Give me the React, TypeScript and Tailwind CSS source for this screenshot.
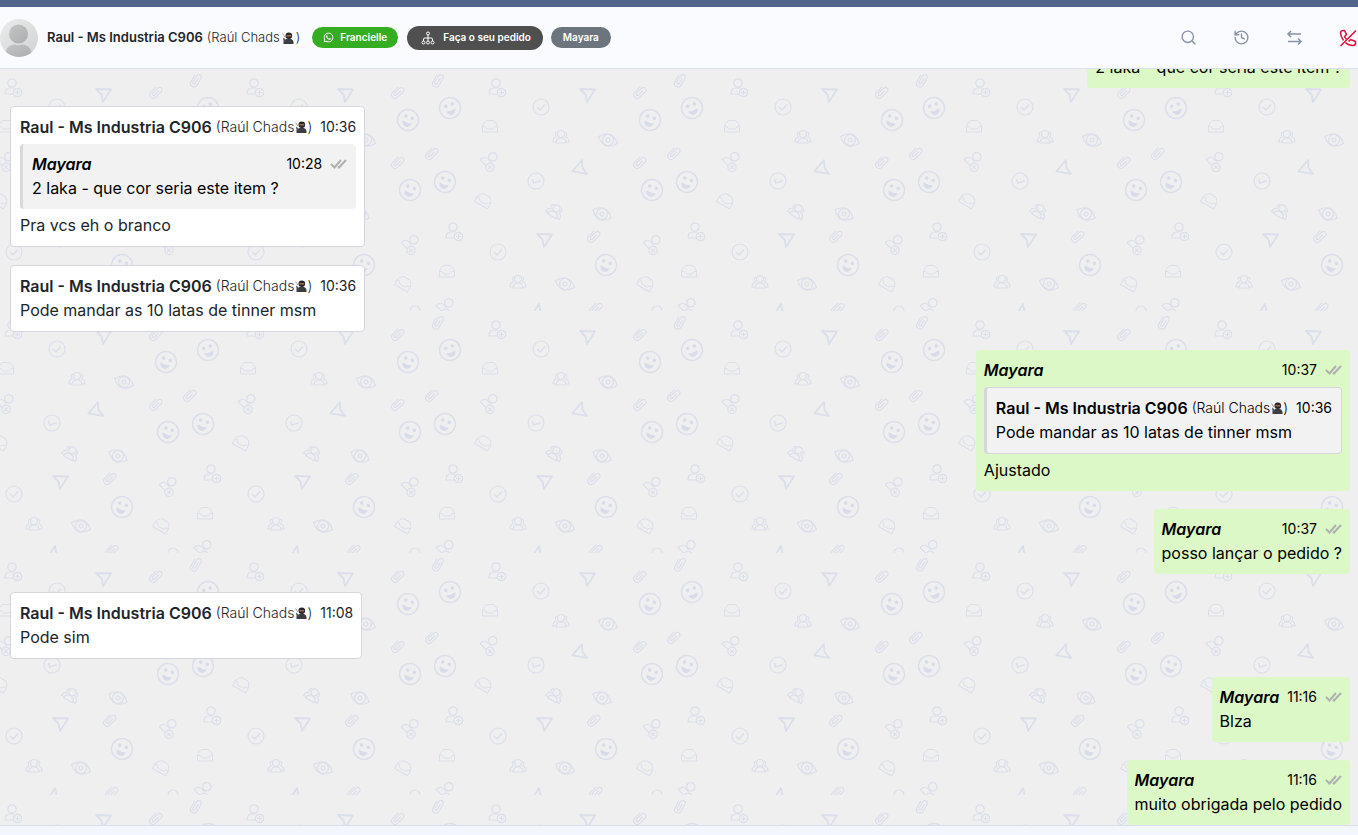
import { ReactNode } from "react"
import clsx from "clsx"
import { History, Search } from "lucide-react"
import { FaWhatsapp } from "react-icons/fa"

type Contact = "raul" | "mayara"

interface Message {
    id: number
    from: Contact
    time: string
    text: string
    quote?: Message
}

const messages: Message[] = [
    { id: 1, from: "mayara", time: "10:28", text: "2 laka - que cor seria este item ?" },
    {
        id: 2,
        from: "raul",
        time: "10:36",
        text: "Pra vcs eh o branco",
        quote: { id: 1, from: "mayara", time: "10:28", text: "2 laka - que cor seria este item ?" },
    },
    { id: 3, from: "raul", time: "10:36", text: "Pode mandar as 10 latas de tinner msm" },
    {
        id: 4,
        from: "mayara",
        time: "10:37",
        text: "Ajustado",
        quote: { id: 3, from: "raul", time: "10:36", text: "Pode mandar as 10 latas de tinner msm" },
    },
    { id: 5, from: "mayara", time: "10:37", text: "posso lançar o pedido ?" },
    { id: 6, from: "raul", time: "11:08", text: "Pode sim" },
    { id: 7, from: "mayara", time: "11:16", text: "Blza" },
    { id: 8, from: "mayara", time: "11:16", text: "muito obrigada pelo pedido" },
]

// doodle name, x, y, rotation inside the 242px tile
const doodles: [string, number, number, number][] = [
    ["clip", 156, 23, 0],
    ["clip", 196, 11, -15],
    ["smile", 166, 51, 20],
    ["smile", 208, 39, -20],
    ["add", 13, 19, 0],
    ["check", 57, 38, 0],
    ["cursor", 103, 26, 0],
    ["inbox", 6, 57, 0],
    ["users", 77, 68, 0],
    ["eye", 124, 71, 20],
    ["clip", 156, 93, 0],
    ["clip", 190, 84, 0],
    ["smile", 168, 121, 20],
    ["smile", 203, 113, 20],
    ["add", 6, 92, 45],
    ["check", 52, 112, 30],
    ["cursor", 97, 98, 188],
    ["inbox", 0, 131, 30],
    ["users", 71, 142, 30],
    ["eye", 118, 145, 25],
    ["add", 169, 175, 45],
    ["add", 212, 163, 0],
    ["check", 14, 183, 0],
    ["cursor", 60, 171, 0],
    ["clip", 110, 167, 0],
    ["smile", 122, 196, 20],
    ["inbox", 205, 202, 0],
    ["inbox", 162, 214, 30],
    ["users", 34, 213, 0],
    ["eye", 81, 215, 20],
    ["clip", 112, 239, 0],
    ["add", 204, 238, 45],
    ["cursor", 55, 242, 180],
    ["head", 173, 241, 0],
]

const shapes: Record<string, ReactNode> = {
    clip: (
        <g transform="rotate(-45)">
            <path d="M4-3.500H-4a3.500 3.500 0 0 0 0 7H4a2.500 2.500 0 0 0 0-5H-3.500a1.200 1.200 0 0 0 0 2.600H3" />
        </g>
    ),
    smile: (
        <g>
            <circle r="10.500" strokeWidth="1.500" />
            <circle cx="-3.500" cy="-3" r="1.800" fill="#d8dcea" stroke="none" />
            <circle cx="3.500" cy="-3" r="1.800" fill="#d8dcea" stroke="none" />
            <path d="M-5 2Q0 3.500 5 2Q4 7 0 7T-5 2Z" fill="#d8dcea" stroke="none" />
        </g>
    ),
    add: (
        <g>
            <circle cx="-1" cy="-5" r="4.200" />
            <path d="M1 6H-8Q-8 0-3 0H1" />
            <circle cx="4.500" cy="4.500" r="4.200" />
            <path d="M4.500 2v5M2 4.500h5" />
        </g>
    ),
    check: (
        <g>
            <circle r="8" />
            <path d="M-4 0l3 3 5-5.500" strokeWidth="1.500" />
        </g>
    ),
    cursor: <path d="M-7-6L8-5.500L0 7L-1.500-0.500Z" strokeWidth="1.800" strokeLinejoin="round" />,
    inbox: (
        <path d="M-7.500 6V0Q-6-4.500-3-5.500H3Q6-4.500 7.500 0V6ZM-7.500 0.500H-5Q-4 3-2 3H2Q4 3 5 0.500H7.500" strokeWidth="1" strokeLinejoin="round" />
    ),
    users: (
        <g>
            <circle cy="-3" r="3.500" />
            <path d="M-5 6Q-5 1 0 1T5 6ZM-5 5H-8Q-8 0-4 0M5 5H8Q8 0 4 0M-4-5Q-7-4-5-1M4-5Q7-4 5-1" />
        </g>
    ),
    eye: (
        <g>
            <path d="M-10 0Q0-12 10 0Q0 12-10 0Z" />
            <circle r="5.500" />
            <circle r="2" />
        </g>
    ),
    head: <circle cy="1" r="5" />,
}

const Doodle = ({ name, x, y, angle }: { name: string; x: number; y: number; angle: number }) => (
    <g transform={`translate(${x} ${y}) rotate(${angle})`}>{shapes[name]}</g>
)

const Wallpaper = () => (
    <svg className="absolute inset-0 h-full w-full" aria-hidden="true">
        <defs>
            <pattern id="doodles" width="242" height="242" patternUnits="userSpaceOnUse">
                <g fill="none" stroke="#dbdfeb" strokeWidth="1.200">
                    {doodles.map(([name, x, y, angle], i) => (
                        <g key={i}>
                            <Doodle name={name} x={x} y={y} angle={angle} />
                            {/* repeat the ones that cross the left edge */}
                            {x < 16 && <Doodle name={name} x={x + 242} y={y} angle={angle} />}
                        </g>
                    ))}
                </g>
            </pattern>
        </defs>
        <rect width="100%" height="100%" fill="url(#doodles)" />
    </svg>
)

const Ninja = ({ className }: { className?: string }) => (
    <svg viewBox="0 0 12 12" className={clsx("inline-block", className)} role="img" aria-label="ninja">
        <path d="M0.500 1.500L3 5" stroke="#85858a" strokeWidth="0.800" />
        <path d="M1.500 12V9.500Q2 7.500 4.500 7H9Q11 7.500 11.500 10V12Z" fill="#3c3c44" />
        <circle cx="6.800" cy="3.800" r="3.300" fill="#26262b" />
        <path d="M4.500 3h4.600v1.500H4.500z" fill="#a56b4c" />
        <path d="M1 5.500l2 1.500L3.500 10 1.500 9z" fill="#55555d" />
    </svg>
)

const DoubleCheck = () => (
    <svg viewBox="0 0 17 10" className="h-[10px] w-[17px]" fill="none" stroke="#b0b0b0" strokeWidth="2" aria-label="Lida">
        <path d="M1 5l3.500 3.500L11 1M8 7.500l1 1L16 1" />
    </svg>
)

const MessageHeader = ({ from, time }: { from: Contact; time: string }) => (
    <div className="flex h-6 items-center justify-between whitespace-nowrap">
        {from === "raul" ? (
            <div className="flex items-center">
                <span className="font-semibold">Raul - Ms Industria C906</span>
                <span className="ml-1 flex items-center text-sm font-light">
                    (Raúl Chads
                    <Ninja className="ml-px size-3" />)
                </span>
            </div>
        ) : (
            <span className="font-semibold italic">Mayara</span>
        )}
        <div className="ml-2 flex items-center gap-2 text-sm">
            <time>{time}</time>
            {from === "mayara" && <DoubleCheck />}
        </div>
    </div>
)

const Quote = ({ message }: { message: Message }) => (
    <blockquote
        className={clsx(
            "mt-[5px] mb-1 rounded border-l-3 bg-[#f2f2f2] px-[9px] pt-2 pb-[9px] text-black",
            message.from === "raul" ? "border-y border-r border-[#d5d5dd]" : "border-[#d9d9d9]"
        )}
    >
        <MessageHeader from={message.from} time={message.time} />
        <p>{message.text}</p>
    </blockquote>
)

const Bubble = ({ message }: { message: Message }) => (
    <li
        className={clsx(
            "shrink-0 rounded pt-2 pb-[9px]",
            message.from === "raul"
                ? "self-start border border-[#d5d5df] bg-white pr-2 pl-[9px] text-[#212529]"
                : "self-end bg-[#dcf8c6] px-2 text-black"
        )}
    >
        <MessageHeader from={message.from} time={message.time} />
        {message.quote && <Quote message={message.quote} />}
        <p>{message.text}</p>
    </li>
)

const Avatar = () => (
    <svg viewBox="0 0 38 38" className="size-[38px] rounded-full" role="img" aria-label="Raul">
        <defs>
            <linearGradient id="back" x1="0" y1="0" x2="1" y2="1">
                <stop offset="0" stopColor="#ebebeb" />
                <stop offset="1" stopColor="#d2d3d4" />
            </linearGradient>
            <linearGradient id="body" x1="0" y1="0" x2="1" y2="1">
                <stop offset="0" stopColor="#c4c5c6" />
                <stop offset="1" stopColor="#acadaf" />
            </linearGradient>
        </defs>
        <rect width="38" height="38" fill="url(#back)" />
        <circle cx="18.500" cy="15" r="9.500" fill="url(#body)" />
        <path d="M5 38Q5 26 15 25.500Q18.500 27 22 25.500Q32 26 32 38Z" fill="url(#body)" />
    </svg>
)

const ChatHeader = () => (
    <header className="flex h-[62px] shrink-0 items-center border-b border-[#dce1ec] bg-[#fafbff] whitespace-nowrap">
        <Avatar />
        <h1 className="ml-[9px] flex items-center text-[13px] text-[#212529]">
            <span className="font-semibold">Raul - Ms Industria C906</span>
            <span className="ml-1 flex items-center font-light">
                (Raúl Chads
                <Ninja className="mx-0.5 size-3" />)
            </span>
        </h1>
        <div className="ml-3 flex items-center text-[10px] font-semibold text-white">
            <span className="flex h-[21px] items-center gap-1.5 rounded-full bg-[#34ad23] px-[11px]">
                <FaWhatsapp size={11} />
                Francielle
            </span>
            <span className="ml-[9px] flex h-6 items-center gap-2 rounded-full bg-[#4f4f4f] pr-3 pl-[14px]">
                <svg viewBox="0 0 14 14" className="size-[14px]" fill="none" stroke="currentColor" strokeWidth="1">
                    <circle cx="7" cy="2.500" r="1.500" />
                    <path d="M7 4v6M2.500 10V8Q2.500 7 4 7h6q1.500 0 1.500 1v2" />
                    <circle cx="2.500" cy="11.500" r="1.500" />
                    <circle cx="7" cy="11.500" r="1.500" />
                    <circle cx="11.500" cy="11.500" r="1.500" />
                </svg>
                Faça o seu pedido
            </span>
            <span className="ml-2 flex h-[21px] items-center rounded-full bg-[#6c757d] px-3">Mayara</span>
        </div>
        <div className="ml-auto flex items-center gap-9 text-[#8a94a8]">
            <button type="button" aria-label="Buscar">
                <Search size={17} strokeWidth={2} />
            </button>
            <button type="button" aria-label="Histórico">
                <History size={17} strokeWidth={2} />
            </button>
            <button type="button" aria-label="Transferir">
                <svg viewBox="0 0 17 17" className="size-[17px]" fill="none" stroke="currentColor" strokeWidth="1.500">
                    <path d="M15 5H2M5 2L2 5l3 3M2 12.500h13M12 9.500l3 3-3 3" />
                </svg>
            </button>
            <button type="button" aria-label="Encerrar" className="mr-px text-[#dc143c]">
                <svg viewBox="0 0 18 18" className="size-[18px]" fill="none" stroke="currentColor" strokeWidth="1.600" strokeLinejoin="round">
                    <path d="M7.500 10Q5 8 6 7L7.500 5.500 5.500 1.500Q1.500 1 1.500 4Q2 8 4.500 11.500M9.500 11.500Q10.500 12.500 11.500 10.500L16.500 12.500Q17 16.500 14 16.500Q9.500 16.500 6.500 13.500" />
                    <path d="M17 1.500L1.500 17" />
                </svg>
            </button>
        </div>
    </header>
)

export default function App() {
    return (
        <div className="flex h-screen flex-col border-t-[7px] border-[#53658c] bg-[#efefef] font-['Inter',sans-serif]">
            <ChatHeader />
            <main className="relative flex min-h-0 flex-1 flex-col overflow-hidden">
                <Wallpaper />
                <ul className="relative flex min-h-0 flex-1 flex-col justify-end gap-[18px] pr-2 pl-[10px]">
                    {messages.map((message) => (
                        <Bubble key={message.id} message={message} />
                    ))}
                </ul>
            </main>
            <footer className="h-[10px] shrink-0 border-t border-[#d9deea] bg-[#f3f6fd]" />
        </div>
    )
}
